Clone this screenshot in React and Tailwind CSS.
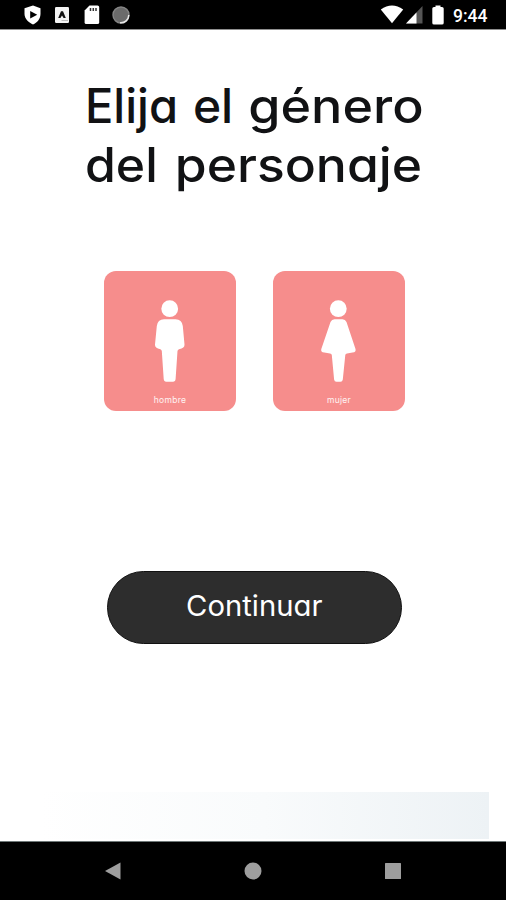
const fontAlt = "font-['Inter','Open_Sans',sans-serif] [font-feature-settings:'cv11','ss03']";

const StatusBar = () => (
  <header className="h-[30px] shrink-0 bg-black border-b border-[#8f8f8f] flex items-center justify-between pl-6 pr-[18px] text-white">
    <div className="flex items-center gap-[13px]">
      <svg width="18" height="20" viewBox="0 0 18 20">
        <path d="M9 .5 L16.5 3.2 V9 C16.5 14 13 17.6 9 19.5 C5 17.6 .5 14 .5 9 V3.2 Z" fill="#fff" />
        <path d="M6.2 6 L13.2 9.8 L6.2 13.5 Z" fill="#000" />
      </svg>
      <svg width="14" height="16" viewBox="0 0 14 16">
        <rect width="14" height="16" rx="1.2" fill="#f4f4f4" />
        <path d="M3.2 11 L6 4.2 H8 L10.8 11 H8.6 L7 8.6 L5.4 11 Z" fill="#111" />
        <path d="M6.5 13.5 H13" stroke="#bbb" strokeWidth="1" />
      </svg>
      <svg width="16" height="20" viewBox="0 0 16 20" className="ml-0.5">
        <path d="M5.5 .5 H13.5 Q15.2 .5 15.2 2 V17.5 Q15.2 19 13.5 19 H2.3 Q.6 19 .6 17.5 V5.5 Z" fill="#fff" />
        <path d="M6.5 3 V6 M9.3 3 V6 M12 3 V6" stroke="#333" strokeWidth="1.5" />
      </svg>
      <svg width="20" height="20" viewBox="0 0 20 20" className="-ml-0.5">
        <circle cx="10" cy="10" r="8" fill="#6b6b6b" stroke="#858585" strokeWidth="1.4" />
        <path d="M17.8 10 A8 8 0 0 1 9 17.8" fill="none" stroke="#e8e8e8" strokeWidth="1.5" />
      </svg>
    </div>
    <div className="flex items-center">
      <svg width="24" height="19" viewBox="0 0 24 19">
        <path d="M.8 4.5 Q12 -3.5 23.2 4.5 L12 18.2 Z" fill="#fff" />
      </svg>
      <svg width="18" height="19" viewBox="0 0 18 19" className="ml-px">
        <path d="M1 18.5 L17.5 1 V18.5 Z" fill="#555" />
        <path d="M1 18.5 L11.5 7.4 V18.5 Z" fill="#fff" />
      </svg>
      <svg width="12" height="20" viewBox="0 0 12 20" className="ml-[9px]">
        <path d="M3.5 .5 H8.5 V2 H10 Q11.7 2 11.7 3.6 V18 Q11.7 19.5 10 19.5 H2 Q.3 19.5 .3 18 V3.6 Q.3 2 2 2 H3.5 Z" fill="#fff" />
      </svg>
      <span className="ml-[9px] mt-0.5 w-[35px] whitespace-nowrap font-['Roboto',sans-serif] text-[17.5px] leading-5 font-medium">9:44</span>
    </div>
  </header>
);

const ManIcon = () => (
  <svg width="132" height="140" viewBox="0 0 132 140" fill="#fff">
    <circle cx="65.7" cy="37.7" r="8.4" />
    <path d="M60 48.3 H71.5 Q78 48.6 78.8 55 L80.5 73.5 Q80.8 77.4 75 78.2 Q73.7 78.6 73.5 80 L71.6 108 Q71.3 110.8 69 110.8 H62.2 Q60 110.8 59.7 108 L57.8 80 Q57.6 78.6 56.4 78.2 Q50.7 77.4 51 73.5 L52.8 55 Q53.6 48.6 60 48.3 Z" />
  </svg>
);

const WomanIcon = () => (
  <svg width="132" height="140" viewBox="0 0 132 140" fill="#fff">
    <circle cx="65.3" cy="37.7" r="8.4" />
    <path d="M61.5 48.3 H69.5 Q72.3 48.3 73.5 51 L82.5 78 Q83.4 81 79.5 81.6 L74 82.4 Q72.5 82.6 72.3 84 L69.8 108.5 Q69.5 110.8 67.5 110.8 H63.4 Q61.4 110.8 61.1 108.5 L58.8 84 Q58.6 82.6 57 82.4 L51.3 81.6 Q47.4 81 48.3 78 L57.5 51 Q58.7 48.3 61.5 48.3 Z" />
  </svg>
);

const GenderCard = ({ label, children }) => (
  <button className="relative w-[132px] h-[140px] rounded-xl bg-[#f68d8c] overflow-hidden">
    {children}
    <span className={`absolute inset-x-0 bottom-[5px] text-center text-[8.5px] leading-[11px] tracking-[0.3px] text-white/90 ${fontAlt}`}>
      {label}
    </span>
  </button>
);

const NavBar = () => (
  <nav className="h-[59px] shrink-0 bg-black border-t border-[#6f7878] flex items-center justify-center gap-[122px]">
    <svg width="18" height="18" viewBox="0 0 18 18"><path d="M1 9 L16.5 .5 V17.5 Z" fill="#9e9e9e" /></svg>
    <svg width="18" height="18" viewBox="0 0 18 18"><circle cx="9" cy="9" r="8.5" fill="#9e9e9e" /></svg>
    <svg width="18" height="18" viewBox="0 0 18 18"><rect x="1" y="1" width="16" height="16" rx=".5" fill="#9e9e9e" /></svg>
  </nav>
);

export default function App() {
  return (
    <div className="w-[506px] h-[900px] bg-white flex flex-col overflow-hidden">
      <StatusBar />
      <main className="flex-1 flex flex-col items-center">
        <h1 className={`mt-[46px] w-[338px] text-[48px] leading-[59px] font-medium text-[#111214] whitespace-nowrap ${fontAlt}`}>
          <span className="flex pl-px -mr-[2px]">
            <span className="origin-left scale-x-[0.98]">Elija</span>
            <span className="ml-[13px]">el</span>
            <span className="ml-auto origin-right scale-x-[1.085]">género</span>
          </span>
          <span className="flex justify-between">
            <span className="ml-px origin-left scale-x-[1.04]">del</span>
            <span className="origin-right scale-x-[1.075]">personaje</span>
          </span>
        </h1>
        <div className="mt-[77px] ml-[3px] flex gap-[37px]">
          <GenderCard label="hombre"><ManIcon /></GenderCard>
          <GenderCard label="mujer"><WomanIcon /></GenderCard>
        </div>
        <button className={`mt-[160px] ml-[2px] w-[295px] h-[73px] pb-[3px] rounded-full bg-[#2d2d2d] border border-[#111] text-[28px] leading-none text-white ${fontAlt}`}>
          <span className="inline-block scale-x-[1.045]">Continuar</span>
        </button>
        <div className="mt-auto mb-[2px] w-[449px] h-[47px] ml-[23px] bg-linear-to-r from-white via-[#f9fbfc] to-[#edf2f5]" />
      </main>
      <NavBar />
    </div>
  );
}
